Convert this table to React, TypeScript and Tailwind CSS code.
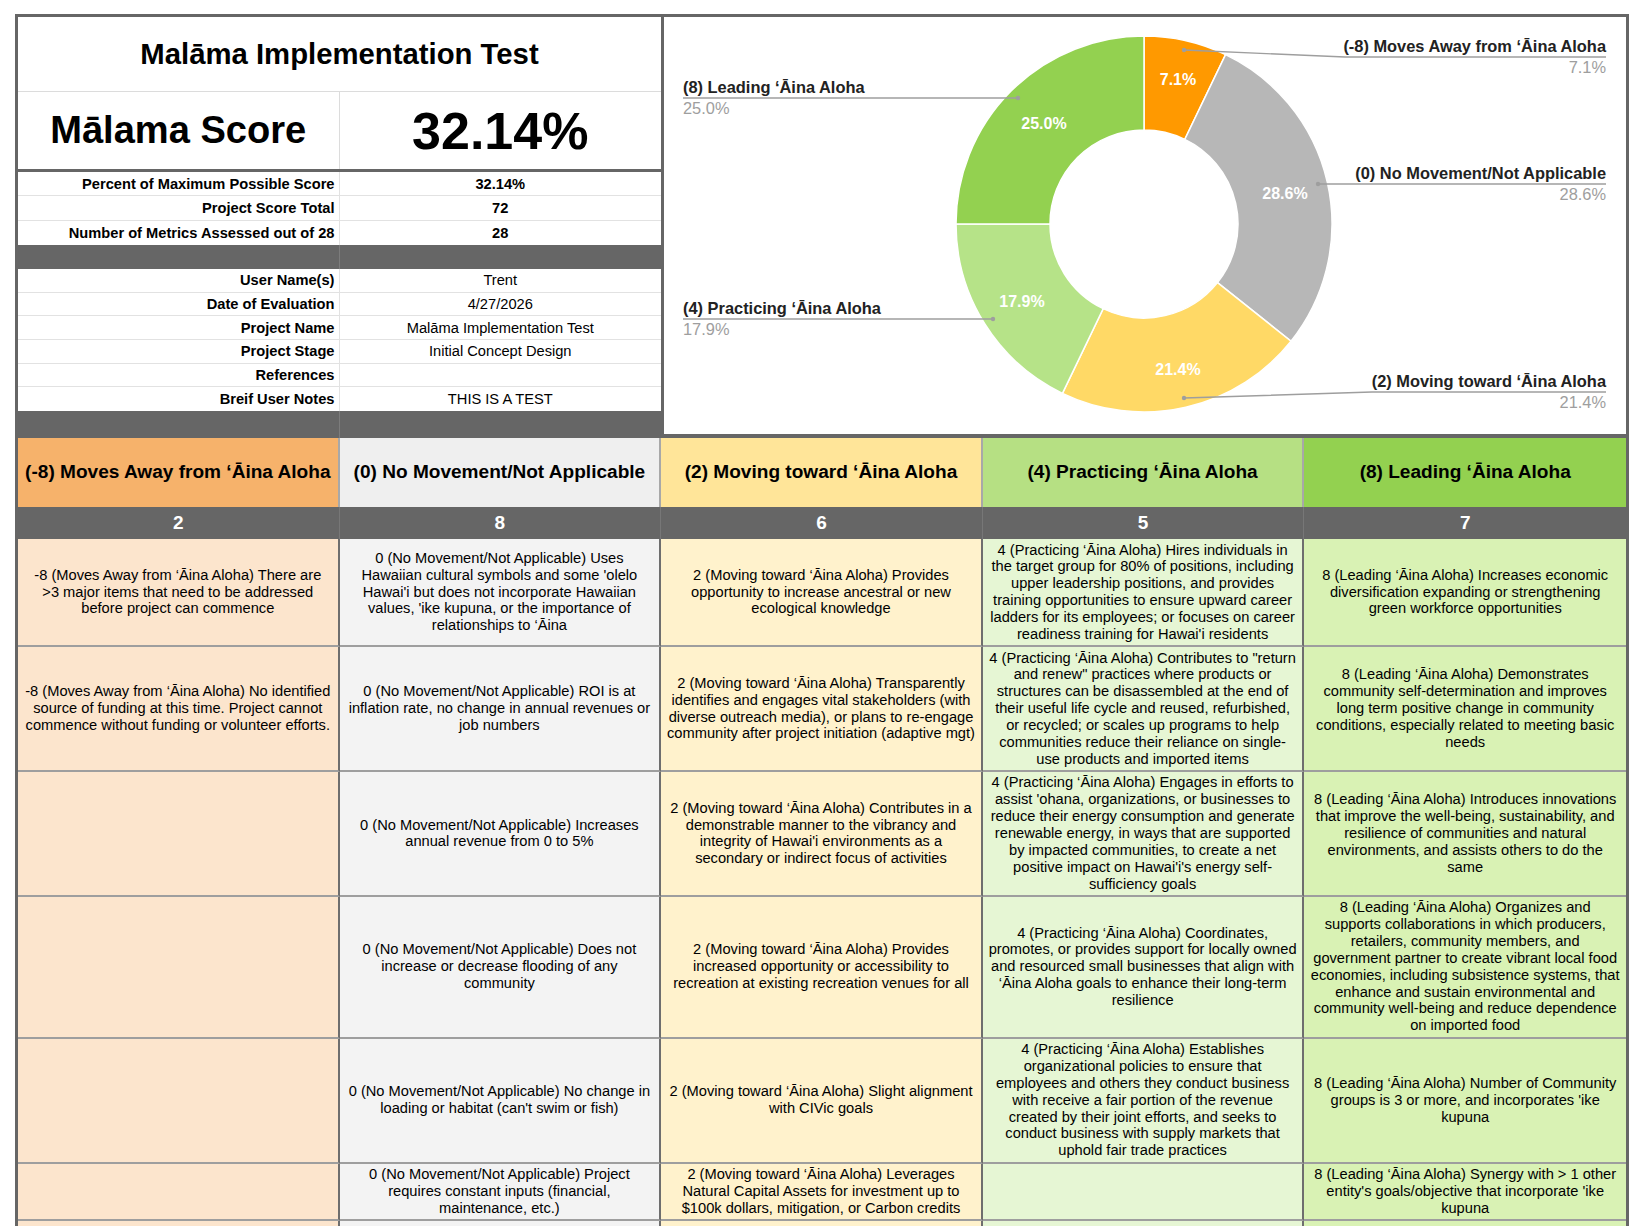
import React from 'react';

interface Level {
  title: string;
  count: number;
  head: string;
  body: string;
}

const LEVELS: Level[] = [
  { title: '(-8) Moves Away from ‘Āina Aloha', count: 2, head: 'bg-[#f6b26b]', body: 'bg-[#fce5cd]' },
  { title: '(0) No Movement/Not Applicable', count: 8, head: 'bg-[#efefef]', body: 'bg-[#f3f3f3]' },
  { title: '(2) Moving toward ‘Āina Aloha', count: 6, head: 'bg-[#ffe599]', body: 'bg-[#fff2cc]' },
  { title: '(4) Practicing ‘Āina Aloha', count: 5, head: 'bg-[#b6e083]', body: 'bg-[#e6f6d4]' },
  { title: '(8) Leading ‘Āina Aloha', count: 7, head: 'bg-[#93d150]', body: 'bg-[#d9f2b4]' },
];

// cell text, one entry per wrapped line as the sheet shows it
const ROWS: string[][][] = [
  [
    ['-8 (Moves Away from ‘Āina Aloha) There are', '>3 major items that need to be addressed', 'before project can commence'],
    [
      '0 (No Movement/Not Applicable) Uses',
      "Hawaiian cultural symbols and some 'olelo",
      "Hawai'i but does not incorporate Hawaiian",
      "values, 'ike kupuna, or the importance of",
      'relationships to ‘Āina',
    ],
    ['2 (Moving toward ‘Āina Aloha) Provides', 'opportunity to increase ancestral or new', 'ecological knowledge'],
    [
      '4 (Practicing ‘Āina Aloha) Hires individuals in',
      'the target group for 80% of positions, including',
      'upper leadership positions, and provides',
      'training opportunities to ensure upward career',
      'ladders for its employees; or focuses on career',
      "readiness training for Hawai'i residents",
    ],
    ['8 (Leading ‘Āina Aloha) Increases economic', 'diversification expanding or strengthening', 'green workforce opportunities'],
  ],
  [
    [
      '-8 (Moves Away from ‘Āina Aloha) No identified',
      'source of funding at this time. Project cannot',
      'commence without funding or volunteer efforts.',
    ],
    ['0 (No Movement/Not Applicable) ROI is at', 'inflation rate, no change in annual revenues or', 'job numbers'],
    [
      '2 (Moving toward ‘Āina Aloha) Transparently',
      'identifies and engages vital stakeholders (with',
      'diverse outreach media), or plans to re-engage',
      'community after project initiation (adaptive mgt)',
    ],
    [
      '4 (Practicing ‘Āina Aloha) Contributes to "return',
      'and renew" practices where products or',
      'structures can be disassembled at the end of',
      'their useful life cycle and reused, refurbished,',
      'or recycled; or scales up programs to help',
      'communities reduce their reliance on single-',
      'use products and imported items',
    ],
    [
      '8 (Leading ‘Āina Aloha) Demonstrates',
      'community self-determination and improves',
      'long term positive change in community',
      'conditions, especially related to meeting basic',
      'needs',
    ],
  ],
  [
    [],
    ['0 (No Movement/Not Applicable) Increases', 'annual revenue from 0 to 5%'],
    [
      '2 (Moving toward ‘Āina Aloha) Contributes in a',
      'demonstrable manner to the vibrancy and',
      "integrity of Hawai'i environments as a",
      'secondary or indirect focus of activities',
    ],
    [
      '4 (Practicing ‘Āina Aloha) Engages in efforts to',
      "assist 'ohana, organizations, or businesses to",
      'reduce their energy consumption and generate',
      'renewable energy, in ways that are supported',
      'by impacted communities, to create a net',
      "positive impact on Hawai'i's energy self-",
      'sufficiency goals',
    ],
    [
      '8 (Leading ‘Āina Aloha) Introduces innovations',
      'that improve the well-being, sustainability, and',
      'resilience of communities and natural',
      'environments, and assists others to do the',
      'same',
    ],
  ],
  [
    [],
    ['0 (No Movement/Not Applicable) Does not', 'increase or decrease flooding of any', 'community'],
    [
      '2 (Moving toward ‘Āina Aloha) Provides',
      'increased opportunity or accessibility to',
      'recreation at existing recreation venues for all',
    ],
    [
      '4 (Practicing ‘Āina Aloha) Coordinates,',
      'promotes, or provides support for locally owned',
      'and resourced small businesses that align with',
      '‘Āina Aloha goals to enhance their long-term',
      'resilience',
    ],
    [
      '8 (Leading ‘Āina Aloha) Organizes and',
      'supports collaborations in which producers,',
      'retailers, community members, and',
      'government partner to create vibrant local food',
      'economies, including subsistence systems, that',
      'enhance and sustain environmental and',
      'community well-being and reduce dependence',
      'on imported food',
    ],
  ],
  [
    [],
    ['0 (No Movement/Not Applicable) No change in', "loading or habitat (can't swim or fish)"],
    ['2 (Moving toward ‘Āina Aloha) Slight alignment', 'with CIVic goals'],
    [
      '4 (Practicing ‘Āina Aloha) Establishes',
      'organizational policies to ensure that',
      'employees and others they conduct business',
      'with receive a fair portion of the revenue',
      'created by their joint efforts, and seeks to',
      'conduct business with supply markets that',
      'uphold fair trade practices',
    ],
    ['8 (Leading ‘Āina Aloha) Number of Community', "groups is 3 or more, and incorporates 'ike", 'kupuna'],
  ],
  [
    [],
    ['0 (No Movement/Not Applicable) Project', 'requires constant inputs (financial,', 'maintenance, etc.)'],
    [
      '2 (Moving toward ‘Āina Aloha) Leverages',
      'Natural Capital Assets for investment up to',
      '$100k dollars, mitigation, or Carbon credits',
    ],
    [],
    ['8 (Leading ‘Āina Aloha) Synergy with > 1 other', "entity's goals/objective that incorporate 'ike", 'kupuna'],
  ],
  [[], [], [], [], []],
];

const STATS = [
  ['Percent of Maximum Possible Score', '32.14%'],
  ['Project Score Total', '72'],
  ['Number of Metrics Assessed out of 28', '28'],
];

const INFO = [
  ['User Name(s)', 'Trent'],
  ['Date of Evaluation', '4/27/2026'],
  ['Project Name', 'Malāma Implementation Test'],
  ['Project Stage', 'Initial Concept Design'],
  ['References', ''],
  ['Breif User Notes', 'THIS IS A TEST'],
];

// donut chart, drawn in page coordinates
const CX = 1144;
const CY = 224;
const R_OUT = 188;
const R_IN = 94;
const SLICES = [
  { value: 2, color: '#ff9900', label: '7.1%', lx: 1178, ly: 79 },
  { value: 8, color: '#b7b7b7', label: '28.6%', lx: 1285, ly: 193 },
  { value: 6, color: '#ffd966', label: '21.4%', lx: 1178, ly: 369 },
  { value: 5, color: '#b6e388', label: '17.9%', lx: 1022, ly: 301 },
  { value: 7, color: '#93d150', label: '25.0%', lx: 1044, ly: 123 },
];

const LEGEND = [
  { text: '(-8) Moves Away from ‘Āina Aloha', pct: '7.1%', anchor: 'end', x: 1606, y: 57, line: '1184,50 1345,57 1606,57' },
  { text: '(0) No Movement/Not Applicable', pct: '28.6%', anchor: 'end', x: 1606, y: 184, line: '1318,184 1606,184' },
  { text: '(2) Moving toward ‘Āina Aloha', pct: '21.4%', anchor: 'end', x: 1606, y: 392, line: '1184,398 1372,392 1606,392' },
  { text: '(4) Practicing ‘Āina Aloha', pct: '17.9%', anchor: 'start', x: 683, y: 319, line: '993,319 683,319' },
  { text: '(8) Leading ‘Āina Aloha', pct: '25.0%', anchor: 'start', x: 683, y: 98, line: '1018,98 683,98' },
];

const pt = (deg: number, rad: number) => {
  const a = (deg * Math.PI) / 180;
  return [CX + rad * Math.sin(a), CY - rad * Math.cos(a)];
};

const slicePath = (a0: number, a1: number) => {
  const large = a1 - a0 > 180 ? 1 : 0;
  const [x0, y0] = pt(a0, R_OUT);
  const [x1, y1] = pt(a1, R_OUT);
  const [x2, y2] = pt(a1, R_IN);
  const [x3, y3] = pt(a0, R_IN);
  return `M${x0} ${y0} A${R_OUT} ${R_OUT} 0 ${large} 1 ${x1} ${y1} L${x2} ${y2} A${R_IN} ${R_IN} 0 ${large} 0 ${x3} ${y3} Z`;
};

const Donut: React.FC = () => {
  const total = SLICES.reduce((s, x) => s + x.value, 0);
  let angle = 0;
  return (
    <svg width="961" height="417" viewBox="664 17 961 417" className="block">
      {SLICES.map((s) => {
        const a0 = angle;
        angle += (s.value / total) * 360;
        return <path key={s.color} d={slicePath(a0, angle)} fill={s.color} stroke="#fff" strokeWidth={1.5} />;
      })}
      {SLICES.map((s) => (
        <text
          key={s.label}
          x={s.lx}
          y={s.ly}
          fill="#fff"
          fontSize="16"
          fontWeight="bold"
          textAnchor="middle"
          dominantBaseline="central"
          fontFamily="'Liberation Sans', Arial, sans-serif"
        >
          {s.label}
        </text>
      ))}
      {LEGEND.map((l) => {
        const start = l.line.split(' ')[0].split(',');
        return (
          <g key={l.text} fontFamily="'Liberation Sans', Arial, sans-serif" fontSize="16.4">
            <polyline points={l.line} fill="none" stroke="#9e9e9e" strokeWidth={1.4} />
            <circle cx={start[0]} cy={start[1]} r={2.2} fill="#9e9e9e" />
            <text x={l.x} y={l.y - 5} textAnchor={l.anchor} fill="#222" fontWeight="bold">
              {l.text}
            </text>
            <text x={l.x} y={l.y + 16} textAnchor={l.anchor} fill="#9e9e9e">
              {l.pct}
            </text>
          </g>
        );
      })}
    </svg>
  );
};

const SummaryBlock: React.FC = () => (
  <div className="flex w-[643px] flex-col">
    <div className="flex h-[75px] items-center justify-center border-b border-[#dcdcdc] text-[29.3px] font-bold text-black">
      Malāma Implementation Test
    </div>
    <div className="flex h-[80px] border-b-[3px] border-[#666]">
      <div className="flex w-1/2 items-center justify-center border-r border-[#dcdcdc] text-[38.1px] font-bold">
        Mālama Score
      </div>
      <div className="flex w-1/2 items-center justify-center text-[52px] font-bold">32.14%</div>
    </div>
    {STATS.map(([label, value], i) => (
      <div key={label} className={`flex h-[24.33px] text-[14.67px] font-bold ${i < 2 ? 'border-b border-[#e2e2e2]' : ''}`}>
        <div className="flex w-1/2 items-center justify-end border-r border-[#e2e2e2] px-[4px]">{label}</div>
        <div className="flex w-1/2 items-center justify-center">{value}</div>
      </div>
    ))}
    <div className="flex h-[24px] bg-[#666]">
      <div className="w-1/2 border-r border-[#7c7c7c]" />
    </div>
    {INFO.map(([label, value], i) => (
      <div key={label} className={`flex h-[23.67px] text-[14.67px] ${i < 5 ? 'border-b border-[#e2e2e2]' : ''}`}>
        <div className="flex w-1/2 items-center justify-end border-r border-[#e2e2e2] px-[4px] font-bold">{label}</div>
        <div className="flex w-1/2 items-center justify-center">{value}</div>
      </div>
    ))}
    <div className="flex h-[27px] bg-[#666]">
      <div className="w-1/2 border-r border-[#7c7c7c]" />
    </div>
  </div>
);

const App: React.FC = () => {
  return (
    <div className="min-h-screen bg-white pl-[15px] pt-[14px] font-['Liberation_Sans',Arial,sans-serif] text-black">
      <div className="w-[1614px] border-[3px] border-b-0 border-[#666]">
        <div className="flex h-[421px]">
          <SummaryBlock />
          <div className="flex-1 overflow-hidden border-b-[4px] border-l-[3px] border-[#666] bg-white">
            <Donut />
          </div>
        </div>

        <div className="grid grid-cols-5">
          {LEVELS.map((lv, i) => (
            <div
              key={lv.title}
              className={`flex h-[69px] items-center justify-center text-[19.07px] font-bold ${lv.head} ${
                i < 4 ? 'border-r-2 border-[#a8a8a8]' : ''
              }`}
            >
              {lv.title}
            </div>
          ))}
        </div>

        <div className="grid h-[32px] grid-cols-5 bg-[#666]">
          {LEVELS.map((lv, i) => (
            <div
              key={lv.title}
              className={`flex items-center justify-center text-[19px] font-bold text-white ${
                i < 4 ? 'border-r border-[#777]' : ''
              }`}
            >
              {lv.count}
            </div>
          ))}
        </div>

        {ROWS.map((row, r) => (
          <div key={r} className="grid grid-cols-5">
            {row.map((lines, c) => (
              <div
                key={c}
                className={`flex min-h-[50px] items-center justify-center whitespace-pre-line border-b-2 border-b-[#9e9e9e] px-[5px] py-[2.5px] text-center text-[14.67px] leading-[16.85px] ${
                  LEVELS[c].body
                } ${c < 4 ? 'border-r-2 border-r-[#6e6e6e]' : ''}`}
              >
                {lines.join('\n')}
              </div>
            ))}
          </div>
        ))}
      </div>
    </div>
  );
};

export default App;
